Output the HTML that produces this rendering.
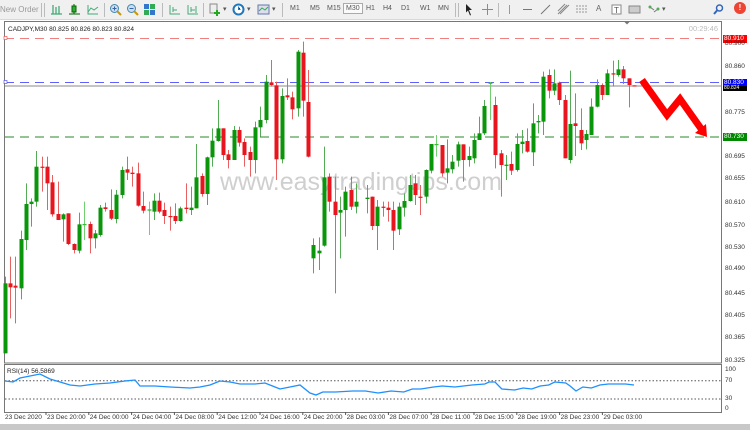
<!DOCTYPE html>
<html><head><meta charset="utf-8"><style>
*{margin:0;padding:0;box-sizing:border-box}
body{width:750px;height:430px;overflow:hidden;background:#fff;font-family:"Liberation Sans",sans-serif;position:relative}
#tb{position:absolute;left:0;top:0;width:750px;height:20px;background:#f0f0f0;border-bottom:1px solid #d8d8d8}
.t{position:absolute;top:5px;font-size:7px;color:#555}
.ic{position:absolute;top:3px;width:13px;height:13px}
.sep{position:absolute;top:3px;width:1px;height:14px;background:#bbb}
.ax{position:absolute;font-size:6.5px;color:#333;left:725px}
.tag{position:absolute;left:723px;width:24px;height:8px;font-size:6.5px;color:#fff;padding-left:1px;line-height:8px}
.tl{position:absolute;top:414px;font-size:6.5px;color:#333;white-space:nowrap}
</style></head><body>
<div id="tb">
<div class="t" style="left:0;font-size:8px;color:#999;top:5px">New Order</div>
<div class="sep" style="left:41px"></div><div class="sep" style="left:44px"></div>
<svg class="ic" style="left:50px" viewBox="0 0 13 13"><path d="M3 2v9M6 4v7M9 3v8M1 11h11" stroke="#4a7" stroke-width="1.3" fill="none"/></svg>
<svg class="ic" style="left:68px" viewBox="0 0 13 13"><rect x="4" y="3" width="4" height="6" fill="#3a3" stroke="#060"/><path d="M6 1v2M6 9v2M1 11h11" stroke="#060"/></svg>
<svg class="ic" style="left:86px" viewBox="0 0 13 13"><path d="M2 2v9h10M2 9l3-4 3 2 4-3" stroke="#4a7" fill="none"/></svg>
<div class="sep" style="left:104px"></div>
<svg class="ic" style="left:109px" viewBox="0 0 13 13"><circle cx="5.5" cy="5.5" r="4" fill="#cde" stroke="#48a"/><path d="M8.5 8.5l3.5 3.5" stroke="#c90" stroke-width="2"/><path d="M3.5 5.5h4M5.5 3.5v4" stroke="#36a"/></svg>
<svg class="ic" style="left:126px" viewBox="0 0 13 13"><circle cx="5.5" cy="5.5" r="4" fill="#cde" stroke="#48a"/><path d="M8.5 8.5l3.5 3.5" stroke="#c90" stroke-width="2"/><path d="M3.5 5.5h4" stroke="#36a"/></svg>
<svg class="ic" style="left:143px" viewBox="0 0 13 13"><rect x="1" y="1" width="5" height="5" fill="#37c"/><rect x="7" y="1" width="5" height="5" fill="#3a5"/><rect x="1" y="7" width="5" height="5" fill="#3a5"/><rect x="7" y="7" width="5" height="5" fill="#37c"/></svg>
<div class="sep" style="left:162px"></div>
<svg class="ic" style="left:168px" viewBox="0 0 13 13"><path d="M2 2v9h10M5 4v5M5 7h4" stroke="#4a7" fill="none"/></svg>
<svg class="ic" style="left:186px" viewBox="0 0 13 13"><path d="M2 2v9h10M5 4v5M5 7h4M10 3v7" stroke="#4a7" fill="none"/></svg>
<div class="sep" style="left:203px"></div>
<svg class="ic" style="left:208px" viewBox="0 0 13 13"><rect x="2" y="1" width="7" height="9" fill="#eee" stroke="#888"/><path d="M9 7v6M6 10h6" stroke="#2a2" stroke-width="2"/></svg>
<div class="t" style="left:223px">▾</div>
<svg class="ic" style="left:232px" viewBox="0 0 13 13"><circle cx="6.5" cy="6.5" r="5" fill="#fff" stroke="#27b" stroke-width="2"/><path d="M6.5 3.5v3h2" stroke="#27b"/></svg>
<div class="t" style="left:247px">▾</div>
<svg class="ic" style="left:257px" viewBox="0 0 13 13"><rect x="1" y="2" width="11" height="9" fill="#dde" stroke="#67a"/><path d="M2 8l3-3 3 2 3-3" stroke="#3a5" fill="none"/></svg>
<div class="t" style="left:272px">▾</div>
<div class="sep" style="left:282px"></div>
<div class="t" style="left:290px">M1</div><div class="t" style="left:310px">M5</div><div class="t" style="left:327px">M15</div>
<div class="t" style="left:343px;top:3px;border:1px solid #aaa;background:#fafafa;padding:1px 2px">M30</div>
<div class="t" style="left:366px">H1</div><div class="t" style="left:383px">H4</div><div class="t" style="left:401px">D1</div><div class="t" style="left:420px">W1</div><div class="t" style="left:438px">MN</div>
<div class="sep" style="left:455px"></div><div class="sep" style="left:458px"></div>
<svg class="ic" style="left:463px" viewBox="0 0 13 13"><path d="M3 1l6 6H6l2 5-1 .5-2-5-2 2z" fill="#222"/></svg>
<svg class="ic" style="left:481px" viewBox="0 0 13 13"><path d="M6.5 1v11M1 6.5h11" stroke="#889"/></svg>
<div class="sep" style="left:498px"></div>
<svg class="ic" style="left:503px" viewBox="0 0 13 13"><path d="M6.5 2v9" stroke="#999"/></svg>
<svg class="ic" style="left:521px" viewBox="0 0 13 13"><path d="M2 6.5h9" stroke="#777"/></svg>
<svg class="ic" style="left:539px" viewBox="0 0 13 13"><path d="M2 11l9-9" stroke="#777"/></svg>
<svg class="ic" style="left:557px" viewBox="0 0 13 13"><path d="M1 11l9-9M3 11l9-9M1 8l7-7" stroke="#888"/></svg>
<svg class="ic" style="left:575px" viewBox="0 0 13 13"><path d="M1 3h11M1 6h11M1 9h11" stroke="#999" stroke-dasharray="2 1"/></svg>
<div class="t" style="left:596px;font-size:8px;color:#666;top:4px">A</div>
<svg class="ic" style="left:610px" viewBox="0 0 13 13"><rect x="2" y="2" width="9" height="9" fill="#fff" stroke="#888"/><text x="4" y="10" font-size="8" fill="#555" font-family="Liberation Sans">T</text></svg>
<svg class="ic" style="left:628px" viewBox="0 0 13 13"><rect x="1" y="3" width="11" height="7" fill="#ccc" stroke="#888"/></svg>
<svg class="ic" style="left:648px" viewBox="0 0 13 13"><path d="M2 4l4 3M6 9l4-3" stroke="#777"/><circle cx="2" cy="4" r="1.5" fill="#5a5"/><circle cx="10" cy="6" r="1.5" fill="#5a5"/></svg>
<div class="t" style="left:662px">▾</div>
<svg class="ic" style="left:712px" viewBox="0 0 13 13"><circle cx="7.5" cy="5" r="3" fill="none" stroke="#36b" stroke-width="1.5"/><path d="M5 7.5l-3 3.5" stroke="#36b" stroke-width="2"/></svg>
<div style="position:absolute;left:734px;top:2px;width:12px;height:12px;border-radius:6px;background:#e43;color:#fff;font-size:8px;text-align:center;line-height:12px;font-weight:bold">!</div>
</div>

<svg id="ch" width="750" height="430" style="position:absolute;left:0;top:0">
<rect x="4.5" y="21.5" width="717" height="341.5" fill="#fff" stroke="#777"/>
<rect x="4.5" y="364.5" width="717" height="48" fill="#fff" stroke="#777"/>
<rect x="0" y="424" width="750" height="6" fill="#c8c8c8"/>
<text x="361" y="190" font-size="25" fill="#cfcfcf" text-anchor="middle" font-family="Liberation Sans">www.easytradingtips.com</text>
<line x1="5" y1="38.5" x2="721" y2="38.5" stroke="#f08080" stroke-dasharray="9 6"/>
<line x1="5" y1="82.5" x2="721" y2="82.5" stroke="#6060ff" stroke-dasharray="9 6"/>
<line x1="5" y1="86" x2="721" y2="86" stroke="#888"/>
<line x1="5" y1="137" x2="721" y2="137" stroke="#2a8a2a" stroke-dasharray="9 6"/>
<rect x="4" y="36.5" width="3" height="3" fill="#fff" stroke="#e55" stroke-width=".7"/>
<rect x="4" y="80.5" width="3" height="3" fill="#fff" stroke="#55e" stroke-width=".7"/>
<g id="cd"></g>
<path d="M642 80L667 115L680 99L702 130" stroke="#f00" stroke-width="7" fill="none" stroke-linejoin="miter"/>
<path d="M695 133L707 137L706 124Z" fill="#f00"/>
<text x="8" y="31" font-size="6.5" fill="#222" font-family="Liberation Sans">CADJPY,M30  80.825 80.826 80.823 80.824</text>
<text x="718" y="31" font-size="7.5" fill="#bbb" text-anchor="end" font-family="Liberation Sans">00:29:46</text>
<path d="M624 21.5l3 3 3-3z" fill="#777"/>
<text x="7" y="373" font-size="6.5" fill="#222" font-family="Liberation Sans">RSI(14) 56.5869</text>
<line x1="5" y1="380.7" x2="721" y2="380.7" stroke="#555" stroke-dasharray="1.5 2"/>
<line x1="5" y1="399" x2="721" y2="399" stroke="#555" stroke-dasharray="1.5 2"/>
<polyline id="rsi" fill="none" stroke="#1e90ff" stroke-width="1.3" points=""/>
<g id="tk"></g>
</svg>
<div class="tag" style="top:34.5px;background:#f00">80.910</div>
<div class="ax" style="top:40px">80.900</div>
<div class="ax" style="top:62.5px">80.860</div>
<div class="tag" style="top:78.5px;background:#00f">80.830</div>
<div class="tag" style="top:86px;background:#000;height:5px;line-height:5px;font-size:5px">80.824</div>
<div class="ax" style="top:109px">80.775</div>
<div class="tag" style="top:133px;background:#080">80.730</div>
<div class="ax" style="top:152.5px">80.695</div>
<div class="ax" style="top:175px">80.655</div>
<div class="ax" style="top:199px">80.610</div>
<div class="ax" style="top:221.5px">80.570</div>
<div class="ax" style="top:243.5px">80.530</div>
<div class="ax" style="top:265px">80.490</div>
<div class="ax" style="top:290px">80.445</div>
<div class="ax" style="top:312px">80.405</div>
<div class="ax" style="top:334px">80.365</div>
<div class="ax" style="top:356.5px">80.325</div>
<div class="ax" style="top:366px">100</div>
<div class="ax" style="top:376.5px">70</div>
<div class="ax" style="top:395px">30</div>
<div class="ax" style="top:404.5px">0</div>
<div id="tls"></div>
<script>
var Z4=[[5,'g',790,1000,770,1000],[10,'r',790,802,710,895],[15,'r',797,803,710,910],[21,'g',657,805,632,838],[26,'g',552,660,490,690],[31,'g',545,552,535,620],[36,'g',440,545,393,560],[42,'r',440,442,410,515],[47,'r',440,490,410,570],[52,'r',487,583,465,590],[58,'r',582,600,485,600],[63,'g',583,598,580,665],[68,'r',580,672,580,675],[74,'r',672,690,670,700],[79,'g',613,692,578,700],[84,'l',612,614,545,660],[90,'r',612,655,605,700],[95,'g',640,655,630,685],[100,'g',563,645,555,650],[105,'r',562,567,548,575],[111,'r',570,596,508,600],[116,'g',524,597,510,610],[122,'g',450,525,440,535],[127,'r',448,458,410,480],[132,'r',458,462,440,500],[138,'r',460,557,428,560],[143,'r',558,572,515,580],[149,'l',568,572,545,645],[154,'g',542,575,520,600],[159,'r',542,575,518,580],[164,'r',570,588,548,612],[170,'r',588,590,560,632],[175,'r',588,603,550,612],[180,'g',565,603,560,605],[186,'r',563,567,490,580],[191,'g',563,570,500,585],[196,'g',472,565,372,565],[202,'r',468,522,460,530],[207,'g',412,522,410,555],[212,'g',362,412,325,440],[218,'g',325,363,240,365],[223,'r',325,405,325,420],[228,'r',403,420,390,445],[234,'g',330,420,318,420],[239,'r',330,368,320,380],[244,'r',366,405,355,440],[250,'r',396,420,380,470],[255,'g',322,420,305,460],[260,'g',300,322,260,350],[266,'g',185,300,165,310],[271,'r',187,195,120,200],[276,'r',196,418,185,480],[282,'g',228,418,205,430],[287,'r',226,232,175,240],[292,'r',232,268,215,298],[298,'g',95,265,90,290],[303,'r',98,242,65,290],[308,'r',246,410,150,412],[313,'g',675,715,655,760],[319,'g',692,700,652,750],[324,'g',472,677,380,680],[329,'r',470,545,460,575],[335,'r',545,585,470,820],[340,'g',570,578,530,715],[345,'g',515,570,500,650],[351,'r',510,560,470,570],[356,'g',545,560,490,580]];
var Z5=[[367,'g',533,537,495,580],[372,'r',530,618,530,630],[377,'g',560,618,540,690],[383,'r',560,563,545,590],[388,'r',563,570,545,605],[393,'r',570,632,545,690],[399,'g',560,628,548,645],[404,'g',543,563,520,590],[410,'g',495,543,465,545],[415,'r',490,525,465,555],[420,'r',530,533,495,585],[426,'g',450,530,448,550],[431,'g',372,452,372,460],[436,'l',372,375,345,410],[442,'r',375,460,375,470],[447,'g',445,458,358,490],[452,'g',425,448,405,460],[458,'g',373,422,365,440],[463,'r',373,420,373,485],[469,'g',408,420,380,440],[474,'g',360,415,340,430],[479,'g',340,360,290,360],[484,'g',258,340,240,345],[490,'l',188,191,186,300],[495,'r',255,405,230,445],[501,'r',400,435,390,530],[506,'g',434,437,405,480],[511,'r',432,452,395,465],[517,'g',372,450,340,455],[522,'g',365,372,330,400],[527,'r',363,395,325,398],[533,'g',310,397,250,438],[538,'g',303,307,285,340],[543,'g',170,305,155,345],[549,'r',165,212,148,235],[554,'g',190,212,148,225],[559,'r',188,240,185,255],[565,'r',240,415,225,415],[570,'g',312,420,152,430],[575,'r',310,318,220,408],[581,'r',330,370,265,390],[586,'g',342,360,330,388],[591,'g',260,345,235,345],[597,'g',195,260,178,262],[602,'r',195,225,190,240],[607,'g',160,225,148,225],[613,'r',160,163,122,200],[618,'g',148,165,120,170],[623,'r',148,175,138,192],[629,'r',175,195,175,262],[634,'r',196,199,196,199]];
var C={g:'#0a960a',r:'#e8141e',l:'#30c030'},W={g:'#55aa55',r:'#e86060',l:'#70d070'};
var s='';
function add(x,c,a,b,h,l){var y1=a/3+20,y2=b/3+20,hy=h/3+20,ly=l/3+20;
s+='<line x1="'+(x+.5)+'" y1="'+hy+'" x2="'+(x+.5)+'" y2="'+ly+'" stroke="'+W[c]+'" stroke-width="1"/>';
s+='<rect x="'+(x-1.5)+'" y="'+y1+'" width="4" height="'+Math.max(1.2,y2-y1)+'" fill="'+C[c]+'"/>';}
Z4.forEach(function(d){add(d[0],d[1],d[2],d[3],d[4],d[5])});
Z5.forEach(function(d){add(d[0],d[1],d[2],d[3],d[4],d[5])});
document.getElementById('cd').innerHTML=s;
var R=[[5,381],[13,382],[20,378],[30,376],[40,374],[50,379],[60,382],[70,385],[80,386],[95,384],[110,383],[125,381],[135,380],[140,386],[155,386],[170,387],[190,388],[200,387],[210,385],[220,381],[230,382],[240,384],[255,384],[265,383],[275,387],[280,389],[290,387],[300,385],[310,393]];
var R2=[[317,395],[325,392],[340,392],[360,391],[375,391],[390,393],[405,391],[420,392],[430,389],[440,389],[455,387],[465,386],[480,387],[500,385],[515,384],[520,382],[527,382],[535,389],[550,390],[560,388],[570,389],[580,386],[590,385],[597,382],[610,383],[615,386],[622,391],[630,387],[640,388],[650,385],[660,384],[680,384],[690,385]];
R2.forEach(function(p){R.push([310+(p[0]-310)*324/380,p[1]])});
document.getElementById('rsi').setAttribute('points',R.map(function(p){return p[0].toFixed(1)+','+p[1]}).join(' '));
var L=['23 Dec 2020','23 Dec 20:00','24 Dec 00:00','24 Dec 04:00','24 Dec 08:00','24 Dec 12:00','24 Dec 16:00','24 Dec 20:00','28 Dec 03:00','28 Dec 07:00','28 Dec 11:00','28 Dec 15:00','28 Dec 19:00','28 Dec 23:00','29 Dec 03:00'];
var h='',t='';
L.forEach(function(n,i){var x=i==0?4:46+(i-1)*42.8;h+='<div class="tl" style="left:'+(x+1)+'px">'+n+'</div>';if(i>0)t+='<line x1="'+x+'" y1="412" x2="'+x+'" y2="415" stroke="#555"/>';});
document.getElementById('tls').innerHTML=h;
document.getElementById('tk').innerHTML=t;
</script>
</body></html>
